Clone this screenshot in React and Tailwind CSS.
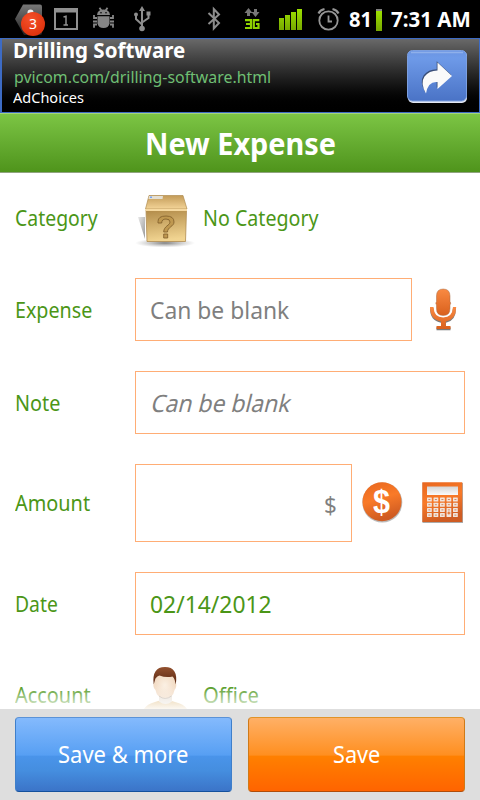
import { useLayoutEffect, useRef, useState } from "react";

// Condenses a line of text so that it fills the width of its wrapper.
function Fit({ children, className }) {
  const outer = useRef(null);
  const inner = useRef(null);
  const [scale, setScale] = useState(1);
  useLayoutEffect(() => {
    setScale(outer.current.offsetWidth / inner.current.offsetWidth);
  }, []);
  return (
    <span ref={outer} className={`block shrink-0 whitespace-nowrap ${className}`}>
      <span ref={inner} className="inline-block origin-left" style={{ transform: `scaleX(${scale})` }}>
        {children}
      </span>
    </span>
  );
}

function StatusBar() {
  return (
    <div className="relative h-[38px] shrink-0 bg-black">
      <svg className="block" width="480" height="38" viewBox="0 0 480 38">
        <defs>
          <linearGradient id="tag" x1="0" y1="0" x2="0" y2="1">
            <stop offset="0" stopColor="#777" />
            <stop offset="1" stopColor="#222" />
          </linearGradient>
          <radialGradient id="red" cx=".4" cy=".3" r=".8">
            <stop offset="0" stopColor="#f4512a" />
            <stop offset="1" stopColor="#dc2d08" />
          </radialGradient>
          <linearGradient id="sig" x1="0" y1="0" x2="0" y2="1">
            <stop offset="0" stopColor="#9be000" />
            <stop offset="1" stopColor="#78a800" />
          </linearGradient>
        </defs>
        <path d="M15 19 23 4.500H40q2 0 2 2V33q0 2-2 2H24Z" fill="url(#tag)" />
        <circle cx="30.500" cy="12.500" r="3" fill="#eee" />
        <circle cx="33" cy="24" r="12" fill="url(#red)" />
        <path fill="#909090" fillRule="evenodd" d="M54 8H78V30H54ZM56 12.500V28H76V12.500Z" />
        <path d="M63.500 17 66 16.300V25M63.500 25H68" fill="none" stroke="#909090" strokeWidth="1.500" />
        <g fill="#858585">
          <path d="M97 15q.5-5.500 6.500-5.500t6.500 5.500Z" />
          <path d="M97.500 16.300h12v7.200q-1 4.500-6 4.500-5 0-6-4.500Z" />
          <path d="m99.500 7.800 2 3M107.500 7.800l-2 3M97 18h-3v-3M97 21.500h-4M97 24.500h-3v3.200M110 18h3v-3M110 21.500h4M110 24.500h3v3.200" fill="none" stroke="#858585" strokeWidth="1.800" />
          <circle cx="101" cy="12.700" r=".8" fill="#000" />
          <circle cx="106" cy="12.700" r=".8" fill="#000" />
        </g>
        <g fill="none" stroke="#8d8d8d" strokeWidth="2">
          <path d="M142 9V28M136 15V19L142 24.500M148.500 14V18L142 22.500" />
          <g fill="#8d8d8d" stroke="none">
            <path d="m142 6 3 5h-6Z" />
            <circle cx="142" cy="28.500" r="2.800" />
            <circle cx="136" cy="14.500" r="2" />
            <path d="M146.500 11.500h4v4h-4Z" />
          </g>
          <path d="m208.500 13 10.500 10-5.200 5.500V9l5.200 5.500-10.500 9.500" strokeWidth="2" />
        </g>
        <path fill="#777" d="m244.500 13 4-5 4 5h-2.500v3h-3v-3ZM251.500 12h2.500V9h3v3h2.500l-4 5Z" />
        <path fill="none" stroke="#8fd400" strokeWidth="2.200" d="M245 20.200h6v7.800h-6M246 24h5M259.300 20.200h-5.500v7.800h4.700v-4H256" />
        <path fill="url(#sig)" d="M279 18h5v12h-5ZM285 15h5v15h-5ZM291 12h5v18h-5ZM297 9h5v21h-5Z" />
        <g fill="none" stroke="#969696" strokeWidth="1.800">
          <circle cx="328.500" cy="20.500" r="9.200" />
          <path d="M328.500 15.500v6h3.500" />
          <path d="M318.500 13.500q1.500-3.500 6-4.500M338.500 13.500q-1.500-3.500-6-4.500" strokeWidth="2.200" />
        </g>
        <path fill="#808080" d="M376 9h6v3h-6Z" />
        <path fill="url(#sig)" d="M376 11h6v20h-6Z" />
      </svg>
      <Fit className="absolute left-[29px] top-[15px] w-[8px] text-[14px] leading-[18px]">3</Fit>
      <Fit className="absolute left-[348.500px] top-[7px] w-[23px] text-[21px] font-bold leading-[24px]">81</Fit>
      <Fit className="absolute left-[391px] top-[7px] w-[80px] text-[21px] font-bold leading-[24px]">7:31 AM</Fit>
    </div>
  );
}

function AdBanner() {
  return (
    <div className="flex h-[75px] shrink-0 items-start justify-between border-y border-l-2 border-r border-[#3d6bc4] bg-linear-to-b from-[#696969] to-black pl-[11px] pr-[11px]">
      <div>
        <Fit className="w-[172px] text-[21px] font-bold leading-[22px]">Drilling Software</Fit>
        <Fit className="ml-[.5px] w-[257px] text-[17px] leading-[31px] text-[#6fbf73]">pvicom.com/drilling-software.html</Fit>
        <Fit className="w-[71px] text-[13.500px] leading-[13px]">AdChoices</Fit>
      </div>
      <svg className="mt-[11px]" width="61" height="53" viewBox="0 0 61 53">
        <defs>
          <linearGradient id="adb" x1="0" y1="0" x2="0" y2="1">
            <stop offset="0" stopColor="#6b95e2" />
            <stop offset=".15" stopColor="#6e9ae8" />
            <stop offset="1" stopColor="#4a73c6" />
          </linearGradient>
        </defs>
        <rect x="1" y="1" width="59" height="52" rx="5" fill="#e4e8f2" />
        <rect x="0.500" y="0.500" width="59" height="50.500" rx="5" fill="url(#adb)" stroke="#7c9fdf" />
        <path d="M4 2.500H56" stroke="#8fb0ea" strokeWidth="1.500" />
        <path transform="translate(-.8 -1.300)" d="M30.500 12.500 45 26 30.500 39V32Q21 31 19 43.500 13 33 17.500 26.500 22 20.500 30.500 20.500Z" fill="#2f3e5e" opacity=".8" />
        <path d="M30.500 12.500 45 26 30.500 39V32Q21 31 19 43.500 13 33 17.500 26.500 22 20.500 30.500 20.500Z" fill="#fafafa" />
      </svg>
    </div>
  );
}

function BoxIcon() {
  return (
    <svg className="shrink-0" width="60" height="60" viewBox="0 0 60 60">
      <defs>
        <linearGradient id="boxf" x1="0" y1="0" x2=".15" y2="1">
          <stop offset="0" stopColor="#b18a48" />
          <stop offset="1" stopColor="#f1d491" />
        </linearGradient>
        <linearGradient id="boxt" x1="0" y1="0" x2="0" y2="1">
          <stop offset="0" stopColor="#c39b58" />
          <stop offset="1" stopColor="#f3d498" />
        </linearGradient>
        <radialGradient id="boxs">
          <stop offset="0" stopColor="#555" stopOpacity=".75" />
          <stop offset="1" stopColor="#888" stopOpacity="0" />
        </radialGradient>
        <linearGradient id="boxl" x1="0" y1="0" x2="1" y2="1">
          <stop offset="0" stopColor="#e8e8e8" />
          <stop offset="1" stopColor="#999" />
        </linearGradient>
      </defs>
      <ellipse cx="30" cy="55" rx="30" ry="4.500" fill="url(#boxs)" />
      <path d="M3 29h7v22Z" fill="url(#boxl)" />
      <path d="M14 7.500H48L52 21H10.500Z" fill="url(#boxt)" stroke="#b08c50" strokeWidth=".7" />
      <path d="M11 22H51.500L50.500 53.500H12Z" fill="url(#boxf)" stroke="#b08c50" strokeWidth=".8" />
      <path d="M10.500 21H52v2H10.500Z" fill="#f6d9a0" />
      <path d="M14 8h14l-.5 3H13.500Z" fill="#e4dfd3" />
      <path d="M15 8.500h2v1.500h-2Z" fill="#78a5f0" />
      <path d="M23 33.500q0-5.500 8-5.500t8 6c0 4.500-6.500 5-6.500 10H28.700c0-6 6.300-6.500 6.300-10q0-3-4-3-4.300 0-4.300 4H23ZM28.700 46h4v4h-4Z" fill="#bf9850" stroke="#7d5c28" strokeWidth=".8" />
    </svg>
  );
}

function PersonIcon() {
  return (
    <svg className="shrink-0" width="60" height="60" viewBox="0 0 60 60">
      <defs>
        <radialGradient id="face" cx=".5" cy=".45" r=".6">
          <stop offset="0" stopColor="#fbf0e3" />
          <stop offset="1" stopColor="#f0d5bb" />
        </radialGradient>
        <linearGradient id="hair" x1="0" y1="0" x2="0" y2="1">
          <stop offset="0" stopColor="#93512f" />
          <stop offset="1" stopColor="#572611" />
        </linearGradient>
      </defs>
      <path d="M9 44q3-5 11-7 5-1.500 6-2.500h8q1 1 6 2.500 9 2 12 7v8H9Z" fill="#dfba7c" />
      <path d="M24 31h13v5.500q-6.500 5-13 0Z" fill="#e6ddd2" />
      <path d="M18.800 18Q19 9 30 9T41 18Q42 22 39.500 25 38 33.500 30 33.500T20.500 25Q17.500 22 18.800 18Z" fill="url(#face)" />
      <path d="M24 31q6 5 12.500 0" fill="none" stroke="#b5aba0" strokeWidth=".9" />
      <path d="M18.700 19.500Q16.500 2 30 2 43.500 2 40.800 19.500L39.700 15Q39 12.500 37.500 11.500 31 13 24.500 10.500 20.500 12 20 15Z" fill="url(#hair)" />
    </svg>
  );
}

function MicIcon() {
  return (
    <svg width="30" height="44" viewBox="0 0 30 44">
      <defs>
        <linearGradient id="mic" x1="0" y1="0" x2="0" y2="1">
          <stop offset="0" stopColor="#f98a43" />
          <stop offset="1" stopColor="#d9601c" />
        </linearGradient>
      </defs>
      <path transform="translate(0 1.200)" opacity=".65" fill="#333" d="M1 19h3.500q.5 10.500 9.800 10.500T24 19h3q0 12.500-10 14.500v4.500h4.500V41H7.500v-3h4.500v-4.500Q1 31.500 1 19Z" />
      <path d="M7.500 8Q7.500 1 14.200 1t6.800 7v5.500q1.500 1.500 0 3.500v3.500q0 7-6.800 7T7.500 20.500V17q-1.500-2 0-3.500Z" fill="url(#mic)" stroke="#a86a42" strokeWidth=".5" />
      <path d="M1 19h3.500q.5 10.500 9.700 10.500T24 19h3.200q0 12.500-10.400 14.500v4.500h4.700V41H7.500v-3h4.500v-4.500Q1 31.500 1 19Z" fill="url(#mic)" />
    </svg>
  );
}

function DollarIcon() {
  return (
    <div className="relative">
      <svg className="block" width="42" height="42" viewBox="0 0 42 42">
        <defs>
          <linearGradient id="coin" x1="0" y1="0" x2=".3" y2="1">
            <stop offset="0" stopColor="#e8671f" />
            <stop offset=".5" stopColor="#f97a28" />
            <stop offset="1" stopColor="#cf5c23" />
          </linearGradient>
        </defs>
        <circle cx="20.300" cy="20.500" r="20" fill="#777" opacity=".5" />
        <circle cx="20" cy="19.800" r="19.500" fill="url(#coin)" />
      </svg>
      <Fit className="absolute left-[11px] top-[-1px] w-[17px] font-['Liberation_Sans'] text-[34px] font-bold leading-[40px]">$</Fit>
    </div>
  );
}

function CalculatorIcon() {
  const keys = [];
  for (let r = 0; r < 4; r++)
    for (let c = 0; c < 5; c++) if (!(c === 3 && r === 3)) keys.push([c, r]);
  return (
    <svg width="42" height="42" viewBox="0 0 42 42">
      <defs>
        <linearGradient id="lcd" x1="0" y1="0" x2="0" y2="1">
          <stop offset="0" stopColor="#d5d5d5" />
          <stop offset="1" stopColor="#fbfbfb" />
        </linearGradient>
      </defs>
      <path d="M.5 1H41V41H.5Z" fill="#888" opacity=".7" />
      <path d="M.3.300h40v39.700H.3Z" fill="url(#coin)" />
      <path d="M5 4.500h31v8.500H5Z" fill="url(#lcd)" />
      {keys.map(([c, r]) => (
        <g key={`${c}-${r}`}>
          <rect x={5 + c * 6.5} y={15.500 + r * 5.2} width="4.800" height={c === 3 && r === 2 ? 9.2 : 4} rx=".5" fill="#f1e4dc" />
          <path d={`M${6.4 + c * 6.5} ${17.5 + r * 5.2}h2`} stroke="#d18a61" strokeWidth="1" />
        </g>
      ))}
      <path d="M25.400 31h3M26.900 29.500v3" stroke="#e0621a" />
    </svg>
  );
}

function Row({ label, width, height, children }) {
  return (
    <div className={`flex shrink-0 items-center px-[15px] ${height}`}>
      <div className="w-[120px] shrink-0 pb-[2px] text-[22px] leading-[28px] text-[#4b9617]">
        <Fit className={width}>{label}</Fit>
      </div>
      {children}
    </div>
  );
}

export default function App() {
  return (
    <div className="relative flex h-[800px] w-[480px] flex-col overflow-hidden bg-white font-['Noto_Sans',sans-serif] text-white">
      <StatusBar />
      <AdBanner />
      <header className="flex h-[60px] shrink-0 items-center justify-center border-b border-t border-b-[#90a47f] border-t-[#a4d47c] bg-linear-to-b from-[#7cc544] to-[#4f941b]">
        <Fit className="w-[191px] text-[30.500px] font-bold leading-[40px]">New Expense</Fit>
      </header>
      <main className="relative flex h-[536px] shrink-0 flex-col overflow-hidden">
        <Row label="Category" width="w-[83px]" height="h-[90px]">
          <BoxIcon />
          <Fit className="mb-[2px] ml-[8px] w-[116px] text-[22px] leading-[28px] text-[#4b9617]">No Category</Fit>
        </Row>
        <Row label="Expense" width="w-[77px]" height="h-[93px]">
          <div className="flex h-[63px] w-[277px] items-center border border-[#ffad75] pl-[14px] text-[24px] leading-[32px] text-[#7f7f7f]">
            <Fit className="w-[139px]">Can be blank</Fit>
          </div>
          <div className="ml-[17px]">
            <MicIcon />
          </div>
        </Row>
        <Row label="Note" width="w-[45px]" height="h-[93px]">
          <div className="flex h-[63px] w-[330px] items-center border border-[#ffad75] pl-[16px] text-[24px] leading-[32px] text-[#7f7f7f]">
            <Fit className="w-[139px] -skew-x-14">Can be blank</Fit>
          </div>
        </Row>
        <Row label="Amount" width="w-[75px]" height="h-[108px]">
          <div className="flex h-[78px] w-[217px] items-center justify-end border border-[#ffad75] pr-[14px] pt-[3px] text-[24px] leading-[32px] text-[#7f7f7f]">
            <Fit className="w-[13px]">$</Fit>
          </div>
          <div className="ml-[10px] flex gap-[18px]">
            <DollarIcon />
            <CalculatorIcon />
          </div>
        </Row>
        <Row label="Date" width="w-[43px]" height="h-[93px]">
          <div className="flex h-[63px] w-[330px] items-center border border-[#ffad75] pl-[14px] text-[24px] leading-[32px] text-[#4b9617]">
            <Fit className="w-[122px]">02/14/2012</Fit>
          </div>
        </Row>
        <Row label="Account" width="w-[76px]" height="h-[90px]">
          <PersonIcon />
          <Fit className="mb-[2px] ml-[8px] w-[56px] text-[22px] leading-[28px] text-[#4b9617]">Office</Fit>
        </Row>
        <div className="absolute inset-x-0 bottom-0 h-[24px] bg-linear-to-b from-white/0 to-white/90" />
      </main>
      <footer className="flex h-[91px] shrink-0 gap-[16px] bg-[#dedede] px-[15px] pt-[8px] text-[24px] leading-[32px]">
        <button className="flex h-[75px] w-[217px] items-center justify-center rounded-[4px] border border-x-[#3f7fca] border-b-[#14509c] border-t-[#5b92d6] bg-[linear-gradient(#84bafd_0%,#579ff3_51%,#4a94ea_52%,#458edf_72%,#3b74c8_100%)] pb-[2px] pr-[2px]">
          <Fit className="w-[130px]">Save &amp; more</Fit>
        </button>
        <button className="flex h-[75px] w-[217px] items-center justify-center rounded-[4px] border border-x-[#cf7a18] border-b-[#b04c08] border-t-[#e09328] bg-[linear-gradient(#ffb066_0%,#ff8f20_51%,#ff8000_52%,#ff6400_100%)] pb-[2px]">
          <Fit className="w-[47px]">Save</Fit>
        </button>
      </footer>
    </div>
  );
}
